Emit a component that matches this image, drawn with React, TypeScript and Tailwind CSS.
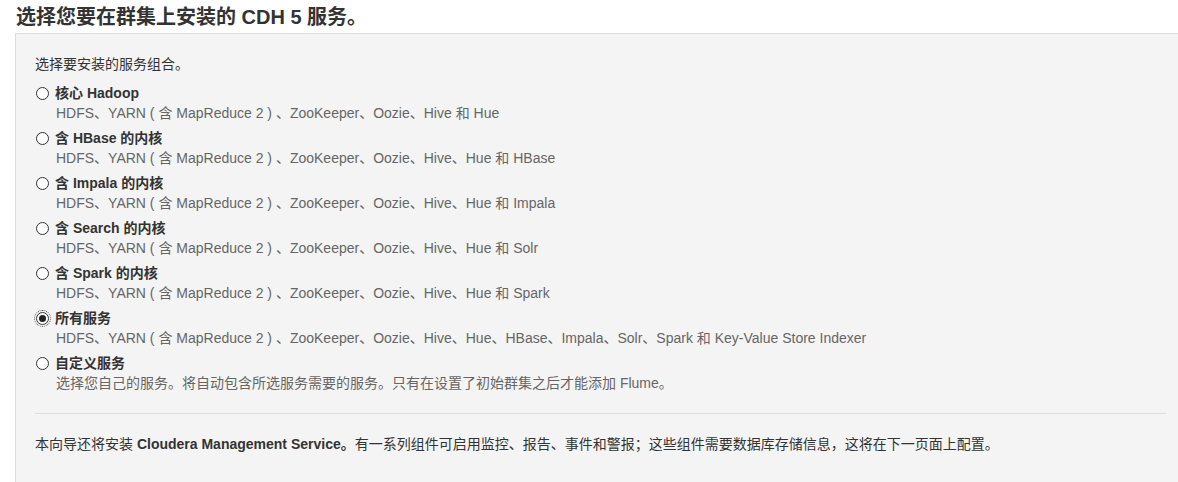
import React from "react";

const font = { fontFamily: '"Liberation Sans", Arial, "Noto Sans CJK SC", sans-serif' };

const options = [
  { label: "核心 Hadoop", desc: "HDFS、YARN ( 含 MapReduce 2 ) 、ZooKeeper、Oozie、Hive 和 Hue" },
  { label: "含 HBase 的内核", desc: "HDFS、YARN ( 含 MapReduce 2 ) 、ZooKeeper、Oozie、Hive、Hue 和 HBase" },
  { label: "含 Impala 的内核", desc: "HDFS、YARN ( 含 MapReduce 2 ) 、ZooKeeper、Oozie、Hive、Hue 和 Impala" },
  { label: "含 Search 的内核", desc: "HDFS、YARN ( 含 MapReduce 2 ) 、ZooKeeper、Oozie、Hive、Hue 和 Solr" },
  { label: "含 Spark 的内核", desc: "HDFS、YARN ( 含 MapReduce 2 ) 、ZooKeeper、Oozie、Hive、Hue 和 Spark" },
  { label: "所有服务", desc: "HDFS、YARN ( 含 MapReduce 2 ) 、ZooKeeper、Oozie、Hive、Hue、HBase、Impala、Solr、Spark 和 Key-Value Store Indexer", checked: true },
  { label: "自定义服务", desc: "选择您自己的服务。将自动包含所选服务需要的服务。只有在设置了初始群集之后才能添加 Flume。" },
];

function Radio({ checked }: { checked?: boolean }) {
  return (
    <span className={"flex h-[13px] w-[13px] shrink-0 items-center justify-center rounded-full border border-[#333] bg-white " + (checked ? "outline outline-1 outline-dotted outline-[#555] outline-offset-1" : "")}>
      {checked && <span className="h-[7px] w-[7px] rounded-full bg-[#222]" />}
    </span>
  );
}

export default function App() {
  return (
    <div className="min-h-[482px] bg-white text-[#333]" style={font}>
      <h1 className="px-4 pt-[4px] text-[20px] font-bold leading-[26px] text-[#333]">选择您要在群集上安装的 CDH 5 服务。</h1>
      <div className="ml-[15px] mt-[3px] border-l border-t border-[#dddddd] bg-[#f4f4f4] pl-[19px] pr-[12px] pt-[21px] pb-[30px]">
        <p className="text-[14px] leading-[18px] text-[#333]">选择要安装的服务组合。</p>
        <div className="mt-[10px] flex flex-col gap-[5px]">
          {options.map((o) => (
            <div key={o.label} className="flex flex-col">
              <div className="flex h-[20px] items-center gap-[6px] pl-[1px]">
                <Radio checked={o.checked} />
                <span className="text-[14px] font-bold text-[#333]">{o.label}</span>
              </div>
              <div className="h-[20px] pl-[21px] text-[14px] leading-[20px] text-[#666]">{o.desc}</div>
            </div>
          ))}
        </div>
        <hr className="mt-[20px] border-t border-[#dddddd]" />
        <p className="mt-[21px] text-[14px] leading-[18px] text-[#333]">
          本向导还将安装 <b>Cloudera Management Service。</b>有一系列组件可启用监控、报告、事件和警报；这些组件需要数据库存储信息，这将在下一页面上配置。
        </p>
      </div>
    </div>
  );
}
